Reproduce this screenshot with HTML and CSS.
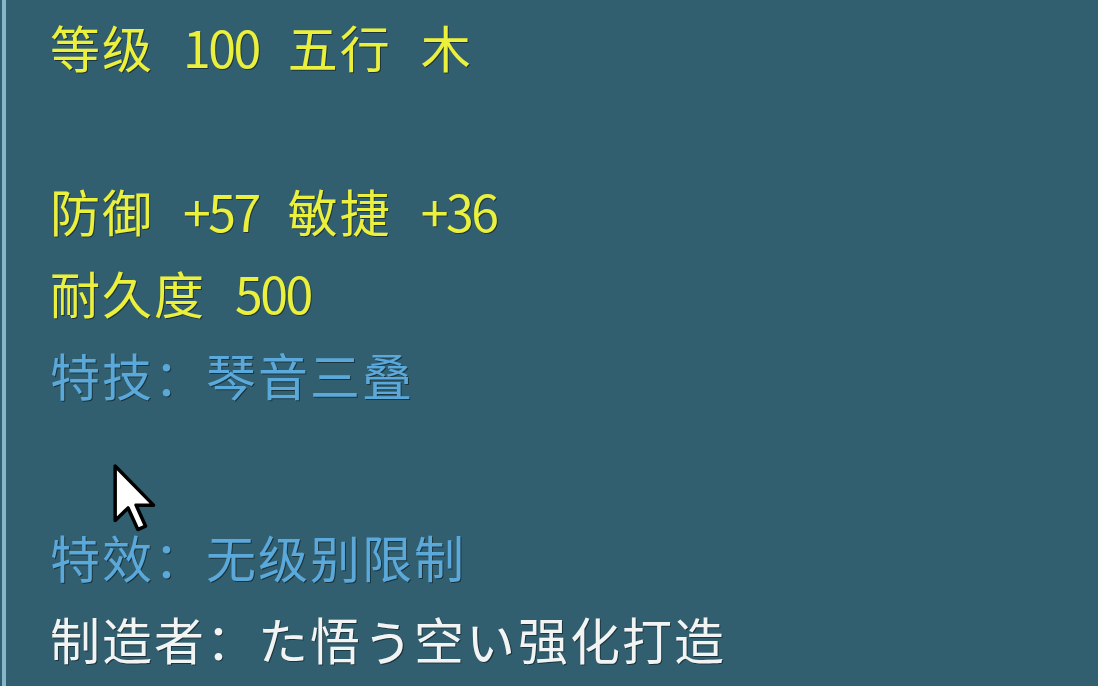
FILE: index.html
```
<!DOCTYPE html>
<html lang="zh">
<head>
<meta charset="utf-8">
<link rel="stylesheet" href="styles.css">
</head>
<body>
<div class="panel">
  <div class="line yellow"><span class="w">等级</span><span class="w num">100</span><span class="w">五行</span><span class="w">木</span></div>
  <div class="line"></div>
  <div class="line yellow"><span class="w">防御</span><span class="w num">+57</span><span class="w">敏捷</span><span class="w num">+36</span></div>
  <div class="line yellow"><span class="w">耐久度</span><span class="w num">500</span></div>
  <div class="line blue">特技：琴音三叠</div>
  <div class="spacer"></div>
  <div class="line blue">特效：无级别限制</div>
  <div class="line white">制造者：た悟<span class="kana">ぅ</span>空<span class="kana">ぃ</span>强化打造</div>
  <svg class="cursor" width="48" height="68" viewBox="0 0 12 19.5">
    <path d="M0.6 0.6 L0.6 16.2 L4.3 12.6 L7.1 18.8 L9.3 17.8 L6.6 11.8 L11.6 11.8 Z" fill="#ffffff" stroke="#000000" stroke-width="1" stroke-linejoin="round"/>
  </svg>
</div>
</body>
</html>
```
FILE: styles.css
```
html, body {
  margin: 0;
  padding: 0;
  background: #325f6f;
}
body {
  width: 1098px;
  height: 686px;
  overflow: hidden;
}
.panel {
  position: relative;
  height: 686px;
  box-sizing: border-box;
  margin-left: 2px;
  border-left: 4px solid #86b6cc;
  padding: 5px 0 0 44px;
  font-family: "Noto Sans CJK SC", "Noto Sans", sans-serif;
  font-size: 50px;
  letter-spacing: 2px;
}
.line {
  height: 82px;
  line-height: 82px;
  white-space: nowrap;
  text-shadow: 1px 1px 0 rgba(0, 0, 0, 0.45);
}
.w {
  margin-right: 29px;
}
.num {
  letter-spacing: -2.5px;
}
.kana {
  display: inline-block;
  transform: scale(1.15) translateY(-2px);
  transform-origin: 50% 60%;
}
.spacer {
  height: 100px;
}
.yellow {
  color: #eaf03c;
}
.blue {
  color: #5ba9da;
}
.white {
  color: #f2f4f4;
}
.cursor {
  position: absolute;
  left: 104px;
  top: 464px;
}
```
